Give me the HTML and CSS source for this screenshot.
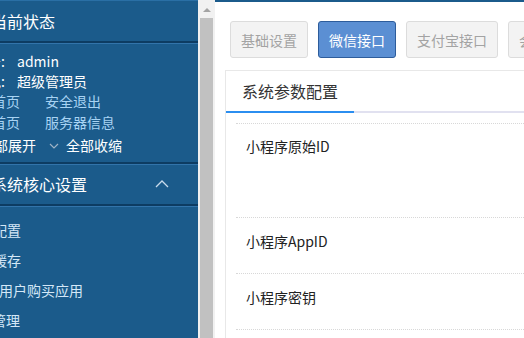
FILE: index.html
```html
<!DOCTYPE html>
<html lang="zh-CN">

<head>
    <meta charset="UTF-8">
    <meta name="viewport" content="width=device-width, initial-scale=1.0">
    <title>系统参数配置</title>
    <link rel="stylesheet" href="styles.css">
</head>

<body>

    <aside class="sidebar">
        <div class="side-title">当前状态</div>

        <div class="status">
            <div class="status-row"><span class="key">账号:</span><span class="val">admin</span></div>
            <div class="status-row"><span class="key">角色:</span><span class="val">超级管理员</span></div>
            <div class="link-row">
                <a href="#">首页</a>
                <a href="#">安全退出</a>
            </div>
            <div class="link-row">
                <a href="#">首页</a>
                <a href="#">服务器信息</a>
            </div>
            <div class="toggle-row">
                <span class="toggle first">全部展开</span>
                <span class="toggle">
                    <svg class="chev" width="10" height="6" viewBox="0 0 10 6"><path d="M1 1 L5 5 L9 1" fill="none" stroke="#9fb3c6" stroke-width="1.2"/></svg>
                    全部收缩
                </span>
            </div>
        </div>

        <div class="side-title group-title">
            系统核心设置
            <svg class="up" width="14" height="8" viewBox="0 0 14 8"><path d="M1 7 L7 1 L13 7" fill="none" stroke="#c9dcec" stroke-width="1.3"/></svg>
        </div>

        <ul class="menu">
            <li><a href="#">基本配置</a></li>
            <li><a href="#">清除缓存</a></li>
            <li><a href="#">所有用户购买应用</a></li>
            <li><a href="#">应用管理</a></li>
        </ul>
    </aside>

    <!-- barre de défilement du menu -->
    <div class="scrollbar">
        <span class="arrow"></span>
        <span class="thumb"></span>
    </div>

    <main class="main">
        <div class="btn-group">
            <button class="btn">基础设置</button>
            <button class="btn active">微信接口</button>
            <button class="btn">支付宝接口</button>
            <button class="btn">会员设置</button>
        </div>

        <div class="panel">
            <div class="tabs">
                <div class="tab current">系统参数配置</div>
            </div>
            <div class="panel-body">
                <div class="row tall"><label>小程序原始ID</label></div>
                <div class="row"><label>小程序AppID</label></div>
                <div class="row"><label>小程序密钥</label></div>
            </div>
        </div>
    </main>

</body>

</html>
```

FILE: styles.css
```css
body {
    margin: 0;
    padding: 0;
    height: 338px;
    overflow: hidden;
    display: flex;
    font-family: 'Noto Sans CJK SC', 'Noto Sans', sans-serif;
    background-color: #fff;
}

.sidebar {
    width: 198px;
    flex-shrink: 0;
    background-color: #1b5b8b;
    border-top: 1px solid #2a6fa5;
    color: #fff;
    overflow: hidden;
}

.side-title {
    height: 40px;
    line-height: 40px;
    font-size: 16px;
    margin-left: -9px;
    white-space: nowrap;
    border-bottom: 2px solid #0d3c62;
    box-shadow: 0 1px 0 #3274aa;
    position: relative;
}

.group-title {
    height: 39px;
    line-height: 39px;
    border-top: 1px solid #3274aa;
}

.group-title .up {
    position: absolute;
    left: 164px;
    top: 15px;
}

.status {
    height: 111px;
    padding-top: 8px;
    font-size: 14px;
    border-bottom: 2px solid #0d3c62;
}

.status-row {
    height: 20px;
    line-height: 20px;
    display: flex;
    margin-left: -27px;
    white-space: nowrap;
}

.status-row .key {
    width: 30px;
    text-align: right;
}

.status-row .val {
    margin-left: 14px;
}

.link-row {
    height: 21px;
    line-height: 21px;
    display: flex;
    gap: 25px;
    margin-left: -8px;
    white-space: nowrap;
}

.link-row a {
    color: #a8d3f3;
    text-decoration: none;
}

.toggle-row {
    height: 24px;
    line-height: 24px;
    display: flex;
    align-items: center;
    margin-left: -20px;
    white-space: nowrap;
}

.toggle {
    display: flex;
    align-items: center;
}

.toggle.first {
    margin-right: 13px;
}

.toggle .chev {
    margin-right: 7px;
    margin-top: 2px;
}

.menu {
    list-style: none;
    margin: 0;
    padding: 9px 0 0;
    font-size: 14px;
}

.menu li {
    height: 30px;
    line-height: 30px;
    white-space: nowrap;
}

.menu li:nth-child(1) a,
.menu li:nth-child(2) a {
    margin-left: -35px;
}

.menu li:nth-child(3) a {
    margin-left: -29px;
}

.menu li:nth-child(4) a {
    margin-left: -36px;
}

.menu a {
    color: #d4e7f7;
    text-decoration: none;
}

.scrollbar {
    width: 17px;
    flex-shrink: 0;
    background-color: #f1f1f1;
    position: relative;
}

.scrollbar .arrow {
    position: absolute;
    left: 5px;
    top: 8px;
    border-left: 4px solid transparent;
    border-right: 4px solid transparent;
    border-bottom: 4px solid #a3a3a3;
}

.scrollbar .thumb {
    position: absolute;
    left: 2px;
    right: 2px;
    top: 18px;
    bottom: 0;
    background-color: #c1c1c1;
}

.main {
    flex: 1;
    min-width: 0;
    overflow: hidden;
    border-top: 2px solid #1b5b8b;
    padding: 19px 0 0 10px;
}

.btn-group {
    display: flex;
    gap: 10px;
    margin-left: 5px;
    white-space: nowrap;
}

.btn {
    height: 37px;
    padding: 0 10px;
    font-family: 'Noto Sans CJK SC', sans-serif;
    font-size: 14px;
    color: #a3a3a3;
    background-color: #f3f3f3;
    border: 1px solid #dcdcdc;
    border-radius: 3px;
    flex-shrink: 0;
}

.btn.active {
    color: #fff;
    background-color: #5b8fd3;
    border-color: #2d5c9b;
}

.panel {
    width: 600px;
    margin-top: 12px;
    border: 1px solid #e8e8e8;
}

.tabs {
    display: flex;
    border-bottom: 2px solid #e1e1f0;
}

.tab {
    height: 40px;
    line-height: 40px;
    padding: 0 16px;
    font-size: 16px;
    color: #333;
    margin-bottom: -2px;
}

.tab.current {
    border-bottom: 2px solid #2b8ef0;
}

.panel-body {
    padding: 10px;
}

.row {
    padding: 14px 10px 23px;
    border-bottom: 1px dotted #d8d8d8;
}

.row:first-child {
    border-top: 1px dotted #d8d8d8;
}

.row.tall {
    padding-top: 13px;
    padding-bottom: 62px;
}

.row label {
    display: block;
    height: 18px;
    line-height: 18px;
    font-size: 14px;
    color: #222;
}
```
